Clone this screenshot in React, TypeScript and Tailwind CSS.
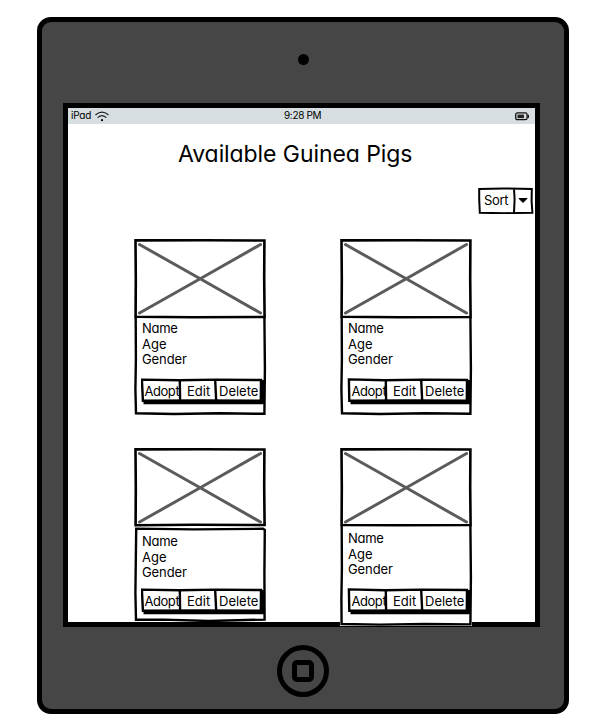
type Shape = {
  photo: string;
  panel: string;
};

const shapes: Record<"top" | "left" | "right", Shape> = {
  top: {
    photo: "M1.5 1.4 L70 1.2 L130.4 1.5 L130.2 40 L130.6 78 L60 78.2 L1.6 77.8 L1.8 40 Z",
    panel: "M1.7 78 L1.9 120 L1.4 150 L2 174.2 L40 175 L85 174.3 L130.4 174.8 L130.9 130 L130.4 78",
  },
  left: {
    photo: "M1.5 1.4 L70 1.2 L130.4 1.5 L130.2 40 L130.6 77 L60 76.8 L1.6 77.2 L1.8 40 Z",
    panel: "M2.2 80.6 L60 81.4 L129 80.8 L130.8 82 L130.4 125 L130.6 171.6 L75 173 L30 171.6 L2 171.8 L1.4 145 Z",
  },
  right: {
    photo: "M1.5 1.4 L70 1.2 L130.4 1.5 L130.2 40 L130.6 77 L60 77.3 L1.6 77 L1.8 40 Z",
    panel: "M1.7 78 L1.9 120 L1.4 150 L1.6 176 L40 176.6 L85 176 L130.4 176.4 L130.9 130 L130.4 78",
  },
};

function Actions({ shift }: { shift: boolean }) {
  return (
    <div className="relative flex h-7 w-[124px] pt-[2px] text-[13px] leading-[22px]">
      <svg className="absolute inset-0" width="124" height="28" fill="none" stroke="#000">
        <path d={shift ? "M3.5 24.2 L123.5 24.2" : "M2.5 24.2 L123.5 24.2"} strokeWidth="4.2" />
        <path d="M121.8 2 L121.8 26" strokeWidth="3.6" />
        <path
          d={
            shift
              ? "M1.9 1.4 L38 2.2 L75 1.6 L120 2 L119.8 22.8 L60 22.4 L2.3 22.8 Z"
              : "M0.9 1.6 L38 2.2 L75 1.6 L120 2 L119.8 22.8 L60 22.4 L1.9 22.8 Z"
          }
          fill="#fff"
          strokeWidth="2.4"
        />
        <path d="M38.8 2.2 L39.1 23 M74.2 2.4 L75.2 23" strokeWidth="2.4" />
      </svg>
      <span className={`relative w-[42px] tracking-[-0.45px] ${shift ? "pl-[4.5px]" : "pl-[3.5px]"}`}>Adopt</span>
      <span className="relative w-[36px] pl-[4px]">Edit</span>
      <span className="relative">Delete</span>
    </div>
  );
}

function PigCard({ kind, shift = false }: { kind: "top" | "left" | "right"; shift?: boolean }) {
  const s = shapes[kind];
  const pad = kind === "top" ? "pt-[2px]" : kind === "left" ? "pt-[6px]" : "pt-[3px]";
  const gap = kind === "left" ? "mt-[8px]" : "mt-[11px]";
  return (
    <article className="relative w-[132px]">
      <svg className="absolute left-0 top-0 overflow-visible" width="132" height="180" fill="none" stroke="#000" strokeWidth="2.6">
        {kind === "right" && <path d="M0 78 H132 V178 H0 Z" fill="#fff" stroke="none" />}
        <path d={s.photo} fill="#fff" />
        <path d="M5.5 5.5 L66.2 39.8 L126.5 74 M126.5 5.5 L66.2 39.8 L5.5 74" stroke="#5b5b5b" strokeWidth="3" strokeLinecap="round" />
        <path d={s.panel} strokeWidth="2.4" />
      </svg>
      <div className="h-[79px]" />
      <div className={`relative pl-[8px] ${pad}`}>
        <p className="h-[16px] text-[13px] leading-[16px] tracking-[-0.3px]">Name</p>
        <p className="h-[15px] text-[13px] leading-[16px]">Age</p>
        <p className="h-[16px] text-[13px] leading-[16px] tracking-[-0.1px]">Gender</p>
        <div className={`-ml-[1px] ${gap}`}>
          <Actions shift={shift} />
        </div>
      </div>
    </article>
  );
}

function Wifi() {
  return (
    <svg width="14" height="11" viewBox="0 0 14 11" fill="none" stroke="#222" strokeWidth="1.2" strokeLinecap="round">
      <path d="M0.8 3.7 Q7 -1.3 13.2 3.7 M3 6.4 Q7 3 11 6.4" />
      <circle cx="7" cy="9.2" r="1.1" fill="#000" stroke="none" />
    </svg>
  );
}

export default function App() {
  return (
    <div className="h-[719px] w-[591px] overflow-hidden bg-white pl-[37px] pt-[17px] font-['Inter','Liberation_Sans',sans-serif] text-black [font-feature-settings:'cv11']">
      <div className="flex h-[697px] w-[532px] flex-col rounded-[14px] border-[5px] border-black bg-[#464646]">
        <div className="flex h-[81px] shrink-0 justify-center pt-[32px]">
          <div className="size-[11px] rounded-full bg-black" />
        </div>
        <main className="ml-[21px] h-[524px] w-[477px] shrink-0 border-[5px] border-black bg-white">
          <header className="flex h-[16px] items-center bg-[#d6dee1] px-[3px] text-[10px] leading-[14px]">
            <div className="flex w-[213px] items-center gap-[4px]">
              <span className="-mt-[2px] tracking-[-0.2px]">iPad</span>
              <Wifi />
            </div>
            <span className="-mt-[2px] tracking-[-0.35px]">9:28 PM</span>
            <div className="flex flex-1 justify-end pr-[3px]">
              <svg width="14" height="9" fill="none" stroke="#111" strokeWidth="1.3">
                <rect x="0.7" y="0.9" width="11.4" height="6.8" rx="1.8" />
                <path d="M13.3 2.7 V6" />
                <rect x="2.5" y="2.6" width="6.5" height="3.5" fill="#222" stroke="none" />
              </svg>
            </div>
          </header>
          <h1 className="ml-[110px] mt-[14px] h-[32px] whitespace-nowrap text-[23px] leading-[33px] tracking-[-0.08px]">Available Guinea Pigs</h1>
          <div className="relative ml-[410px] mt-[17px] flex h-[27px] w-[56px] pl-[6px] text-[13px] leading-[26px]">
            <svg className="absolute inset-0" width="56" height="27" fill="none" stroke="#000" strokeWidth="2">
              <path d="M1.2 2 L25 1.5 L53.8 2 L53.6 14 L54.4 25.7 L27 26.2 L1.8 25.8 L1.2 12 Z M36 1.8 L36.6 12 L36 26" />
              <path d="M41 11.5 H49 L45 15.5 Z" fill="#000" strokeWidth="1" />
            </svg>
            <span className="relative tracking-[-0.3px]">Sort</span>
          </div>
          <div className="ml-[66px] mt-[25px] grid grid-cols-[132px_132px] grid-rows-[209px_180px] gap-x-[74px]">
            <PigCard kind="top" />
            <PigCard kind="top" shift />
            <PigCard kind="left" />
            <PigCard kind="right" shift />
          </div>
        </main>
        <div className="flex justify-center pt-[18px]">
          <div className="flex size-[52px] items-center justify-center rounded-full border-[5px] border-black">
            <div className="size-[22px] rounded-[5px] border-[5px] border-black" />
          </div>
        </div>
      </div>
    </div>
  );
}
